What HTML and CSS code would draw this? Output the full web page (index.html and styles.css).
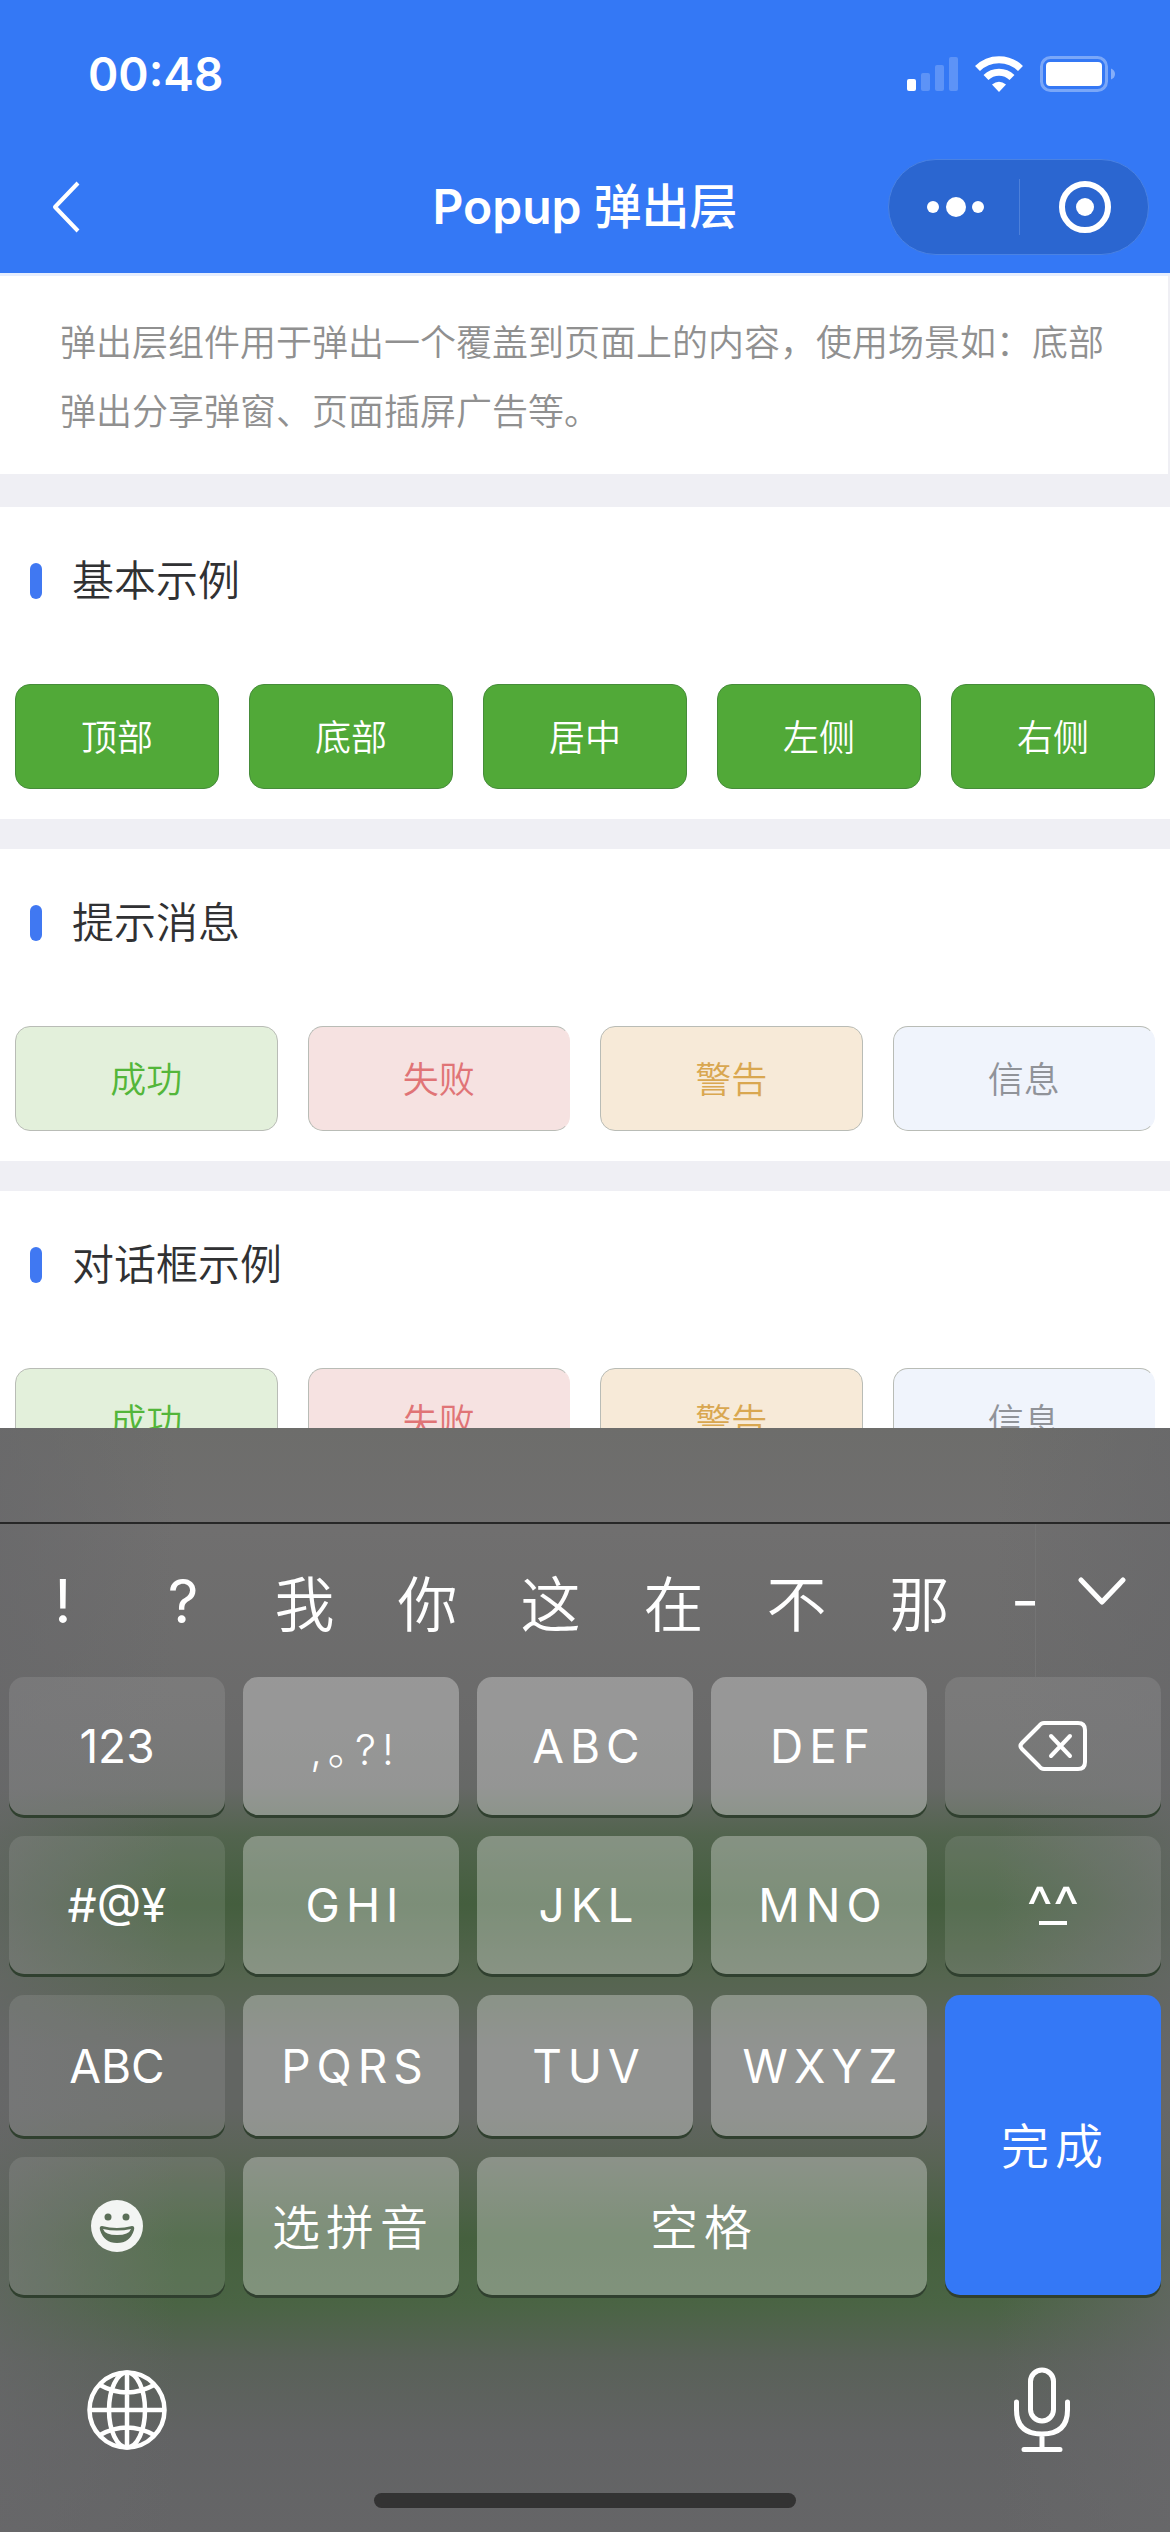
FILE: index.html
```html
<!DOCTYPE html>
<html lang="zh-CN">
<head>
<meta charset="utf-8">
<meta name="viewport" content="width=device-width, initial-scale=1">
<title>Popup 弹出层</title>
<link rel="stylesheet" href="styles.css">
</head>
<body>
<div class="app">
  <header class="header">
    <div class="status">
      <span class="time">00:48</span>
      <div class="status-icons">
        <svg width="51" height="36" viewBox="0 0 51 36" fill="#fff" aria-hidden="true">
          <rect x="0" y="23" width="9" height="12" rx="2"/>
          <g opacity=".2"><rect x="14" y="17" width="9" height="18" rx="2"/><rect x="28" y="9" width="9" height="26" rx="2"/><rect x="42" y="1" width="9" height="34" rx="2"/></g>
        </svg>
        <svg class="wifi" width="48" height="36" viewBox="0 0 48 36" fill="none" stroke="#fff" aria-hidden="true">
          <path d="M2.5 12.5A30.500 30.500 0 0 1 45.500 12.500" stroke-width="7"/>
          <path d="M11 21.500A18.500 18.500 0 0 1 37 21.500" stroke-width="7"/>
          <path d="M24 36L17 28.500Q24 23 31 28.500Z" fill="#fff" stroke="none"/>
        </svg>
        <svg width="76" height="36" viewBox="0 0 76 36" aria-hidden="true">
          <rect x="1.500" y="1.500" width="65" height="33" rx="9" fill="none" stroke="#fff" stroke-opacity=".35" stroke-width="3"/>
          <rect x="6" y="6" width="56" height="24" rx="4" fill="#fff"/>
          <path d="M71 12.500Q75 14 75 18T71 23.500Z" fill="#fff" fill-opacity=".4"/>
        </svg>
      </div>
    </div>
    <nav class="nav">
      <button class="back" type="button" aria-label="返回">
        <svg width="30" height="52" viewBox="0 0 30 52" fill="none" stroke="#fff" stroke-width="4" stroke-linejoin="round"><path d="M27 2L4 26L27 50"/></svg>
      </button>
      <h1 class="title">Popup <span class="title-cjk">弹出层</span></h1>
      <div class="capsule">
        <button class="capsule-btn" type="button" aria-label="更多">
          <svg width="58" height="20" viewBox="0 0 58 20" fill="#fff"><circle cx="6" cy="10" r="6"/><circle cx="29" cy="10" r="10"/><circle cx="51" cy="10" r="6"/></svg>
        </button>
        <button class="capsule-btn" type="button" aria-label="关闭">
          <svg width="52" height="52" viewBox="0 0 52 52"><circle cx="26" cy="26" r="23" fill="none" stroke="#fff" stroke-width="6"/><circle cx="26" cy="26" r="9" fill="#fff"/></svg>
        </button>
      </div>
    </nav>
  </header>

  <main class="content">
    <p class="intro">弹出层组件用于弹出一个覆盖到页面上的内容，使用场景如：底部弹出分享弹窗、页面插屏广告等。</p>
    <section class="card">
      <h2 class="card-title">基本示例</h2>
      <div class="buttons">
        <button class="btn btn-primary" type="button">顶部</button>
        <button class="btn btn-primary" type="button">底部</button>
        <button class="btn btn-primary" type="button">居中</button>
        <button class="btn btn-primary" type="button">左侧</button>
        <button class="btn btn-primary" type="button">右侧</button>
      </div>
    </section>
    <section class="card">
      <h2 class="card-title">提示消息</h2>
      <div class="buttons">
        <button class="btn btn-success" type="button">成功</button>
        <button class="btn btn-error" type="button">失败</button>
        <button class="btn btn-warning" type="button">警告</button>
        <button class="btn btn-info" type="button">信息</button>
      </div>
    </section>
    <section class="card">
      <h2 class="card-title">对话框示例</h2>
      <div class="buttons">
        <button class="btn btn-success" type="button">成功</button>
        <button class="btn btn-error" type="button">失败</button>
        <button class="btn btn-warning" type="button">警告</button>
        <button class="btn btn-info" type="button">信息</button>
      </div>
    </section>
  </main>

  <div class="keyboard">
    <div class="accessory"></div>
    <div class="candidates">
      <div class="words">
        <button class="word word-mark" type="button">!</button>
        <button class="word word-mark" type="button">?</button>
        <button class="word" type="button">我</button>
        <button class="word" type="button">你</button>
        <button class="word" type="button">这</button>
        <button class="word" type="button">在</button>
        <button class="word" type="button">不</button>
        <button class="word" type="button">那</button>
        <button class="word" type="button">一</button>
      </div>
      <button class="expand" type="button" aria-label="展开候选">
        <svg width="48" height="30" viewBox="0 0 48 30" fill="none" stroke="#fff" stroke-width="5" stroke-linecap="round" stroke-linejoin="round"><path d="M3 3L24 25L45 3"/></svg>
      </button>
    </div>
    <div class="keys">
      <button class="key key-dark" type="button">123</button>
      <button class="key key-wide key-punct" type="button">,｡?!</button>
      <button class="key key-wide" type="button">ABC</button>
      <button class="key key-wide" type="button">DEF</button>
      <button class="key key-dark" type="button" aria-label="删除">
        <svg width="70" height="52" viewBox="0 0 70 52" fill="none" stroke="#fff" stroke-width="4" stroke-linecap="round" stroke-linejoin="round"><path d="M26 3H60Q67 3 67 10V42Q67 49 60 49H26Q23 49 21 46L4 29Q1 26 4 23L21 6Q23 3 26 3Z"/><path d="M33 16L52 36M52 16L33 36"/></svg>
      </button>

      <button class="key key-dark" type="button">#@¥</button>
      <button class="key key-wide" type="button">GHI</button>
      <button class="key key-wide" type="button">JKL</button>
      <button class="key key-wide" type="button">MNO</button>
      <button class="key key-dark key-face" type="button">^^</button>

      <button class="key key-dark" type="button">ABC</button>
      <button class="key key-wide" type="button">PQRS</button>
      <button class="key key-wide" type="button">TUV</button>
      <button class="key key-wide" type="button">WXYZ</button>
      <button class="key key-wide key-cjk key-done" type="button">完成</button>

      <button class="key key-dark" type="button" aria-label="表情">
        <svg width="52" height="52" viewBox="0 0 52 52"><circle cx="26" cy="26" r="26" fill="#f3f5f3"/><g fill="#5b6f58"><circle cx="17" cy="17" r="3.500"/><circle cx="35" cy="17" r="3.500"/><path d="M11 26Q26 30 41 26Q44 26 43 30Q39 43 26 43T9 30Q8 26 11 26Z"/></g><path d="M12 29Q26 32 40 29Q38 35 26 35T12 29Z" fill="#f3f5f3"/></svg>
      </button>
      <button class="key key-wide key-cjk" type="button">选拼音</button>
      <button class="key key-wide key-cjk key-space" type="button">空格</button>
    </div>
    <div class="toolbar">
      <button class="tool" type="button" aria-label="切换输入法">
        <svg width="80" height="80" viewBox="0 0 80 80" fill="none" stroke="#fff" stroke-width="4.500"><circle cx="40" cy="40" r="37.500"/><ellipse cx="40" cy="40" rx="18" ry="37.500"/><path d="M40 2V78M2 40H78M13 15Q40 30 67 15M13 65Q40 50 67 65"/></svg>
      </button>
      <button class="tool" type="button" aria-label="语音输入">
        <svg width="56" height="86" viewBox="0 0 56 86" fill="none" stroke="#fff" stroke-width="5" stroke-linecap="round"><rect x="16.500" y="3" width="23" height="51" rx="11.500"/><path d="M2.500 35V43Q2.500 67 28 67T53.500 43V35M28 67V82M10 82.500H46"/></svg>
      </button>
    </div>
    <div class="home-bar"></div>
  </div>
</div>
</body>
</html>
```
FILE: styles.css
```css
* { box-sizing: border-box; }

body {
  margin: 0;
  background: #efeff4;
  color: #303133;
  font-family: Inter, "Noto Sans CJK SC", sans-serif;
}

button {
  margin: 0;
  padding: 0;
  border: 0;
  background: none;
  color: inherit;
  font: inherit;
}

svg { display: block; }

.app {
  display: flex;
  flex-direction: column;
  height: 100vh;
}

/* Header */
.header {
  flex: none;
  background: #3478f5;
  border-bottom: 3px solid #e6eefe;
  color: #fff;
}

.status {
  display: flex;
  justify-content: space-between;
  align-items: center;
  height: 147px;
  padding: 0 54px 0 88px;
}

.time {
  font-size: 46px;
  font-weight: 600;
}

.status-icons {
  display: flex;
  align-items: center;
  gap: 17px;
}

.nav {
  display: grid;
  grid-template-columns: 1fr auto 1fr;
  align-items: center;
  height: 126px;
  padding: 0 21px 6px 51px;
}

.back { justify-self: start; }

.title {
  margin: 0;
  padding-right: 30px;
  font-size: 48px;
  font-weight: 600;
  line-height: 60px;
}

.title-cjk { font-weight: 500; }

.capsule {
  display: flex;
  justify-self: end;
  width: 261px;
  height: 96px;
  border: 1px solid #4a82e3;
  border-radius: 48px;
  background: #2b66d0;
}

.capsule-btn {
  display: flex;
  flex: 1;
  justify-content: center;
  align-items: center;
  padding-left: 4px;
}

.capsule-btn + .capsule-btn {
  background: linear-gradient(#4d80da, #4d80da) no-repeat left center / 1px 56px;
}

/* Page content */
.content {
  flex: 1;
  min-height: 0;
  overflow-y: auto;
  scrollbar-width: none;
}

.intro {
  margin: 0 2px 33px 0;
  padding: 30px 58px 30px 60px;
  background: #fff;
  color: #909090;
  font-family: "Noto Sans CJK SC", sans-serif;
  font-size: 36px;
  font-weight: 350;
  line-height: 69px;
}

.card {
  margin-bottom: 30px;
  padding: 0 15px 30px;
  background: #fff;
}

.card-title {
  display: flex;
  align-items: center;
  gap: 30px;
  height: 147px;
  margin: 0 15px 30px;
  padding-bottom: 6px;
  font-size: 42px;
  font-weight: 350;
}

.card-title::before {
  width: 12px;
  height: 36px;
  margin-top: 6px;
  border-radius: 6px;
  background: #4078f2;
  content: "";
}

.buttons {
  display: flex;
  gap: 30px;
}

.btn {
  flex: 1;
  height: 105px;
  padding-bottom: 4px;
  border: 1px solid #b9bcb6;
  border-radius: 15px;
  font-size: 36px;
  font-weight: 350;
}

.btn-primary {
  border-color: #468c3a;
  background: #51a938;
  color: #fff;
}

.btn-success {
  background: #e3f0db;
  color: #53b63a;
}

.btn-error {
  border-right-color: #f6e2e1;
  background: #f6e2e1;
  color: #e07476;
}

.btn-warning {
  background: #f7ead8;
  color: #d9a750;
}

.btn-info {
  border-right-color: #f0f4fc;
  background: #f0f4fc;
  color: #909399;
}

/* Keyboard */
.keyboard {
  flex: none;
  background:
    linear-gradient(to right, rgba(104, 104, 106, .7), rgba(104, 104, 106, 0) 15%, rgba(104, 104, 106, 0) 85%, rgba(104, 104, 106, .7)),
    linear-gradient(#6d6d6b 0, #706f6f 100px, #6a6a6a 300px, #666866 360px, #52644e 408px, #445e3e 476px, #55654f 548px, #626562 620px, #626562 680px, #5a6456 730px, #45603e 810px, #4a6444 876px, #596158 930px, #626364 1010px, #656567);
  color: #fff;
}

.accessory {
  height: 96px;
  border-bottom: 2px solid #272727;
}

.candidates {
  display: flex;
  height: 153px;
  padding-right: 45px;
}

.words {
  display: grid;
  flex: 1;
  grid-template-columns: 120px 120px repeat(7, 123px);
  min-width: 0;
  padding-left: 3px;
  overflow: hidden;
}

.word {
  font-size: 60px;
  font-weight: 350;
}

.word-mark { font-weight: 400; }

.expand {
  width: 90px;
  padding: 0 0 18px 42px;
  border-left: 1px solid #747474;
}

.keys {
  display: grid;
  grid-template-columns: repeat(5, 1fr);
  grid-template-rows: 138px 138px 141px 138px;
  gap: 21px 18px;
  padding: 0 9px;
}

.key {
  display: flex;
  justify-content: center;
  align-items: center;
  border-radius: 15px;
  background: rgba(255, 255, 255, .3);
  box-shadow: 0 3px 0 #30402f;
  font-size: 46px;
  font-weight: 400;
}

.key-dark { background: rgba(255, 255, 255, .1); }

.key-wide {
  padding-left: 8px;
  letter-spacing: 6px;
}

.key-punct {
  font-size: 42px;
  font-weight: 300;
}

.key-cjk {
  padding: 0 0 4px 4px;
  font-size: 48px;
  font-weight: 350;
}

.key-face {
  flex-direction: column;
  font-size: 56px;
  line-height: 40px;
}

.key-face::after {
  width: 28px;
  height: 4px;
  margin-top: -5px;
  background: #fff;
  content: "";
}

.key-done {
  grid-column: 5;
  grid-row: 3 / 5;
  background: #3478f6;
}

.key-space { grid-column: 3 / 5; }

.toolbar {
  display: flex;
  justify-content: space-between;
  align-items: center;
  height: 198px;
  padding: 32px 100px 0 87px;
}

.home-bar {
  width: 36%;
  height: 15px;
  margin: 0 auto 24px;
  border-radius: 8px;
  background: #333;
}
```
